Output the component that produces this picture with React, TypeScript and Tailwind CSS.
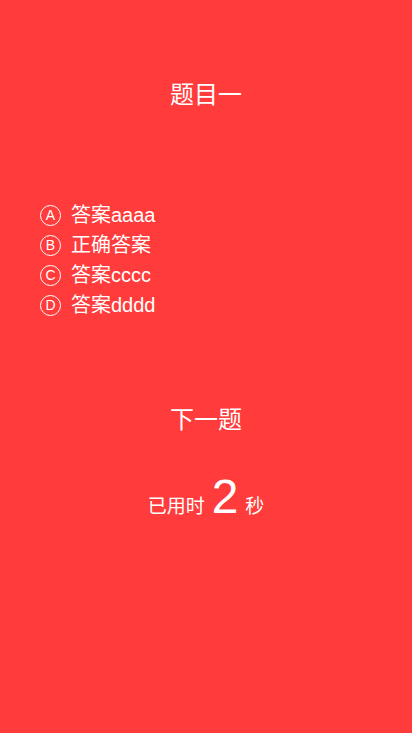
const options = [
  { mark: "A", text: "答案aaaa" },
  { mark: "B", text: "正确答案" },
  { mark: "C", text: "答案cccc" },
  { mark: "D", text: "答案dddd" },
];

export default function App() {
  return (
    <div
      className="w-[412px] h-[733px] bg-[#ff3b3b] text-white flex flex-col"
      style={{ fontFamily: '"Liberation Sans", "Noto Sans CJK SC", sans-serif' }}
    >
      <h1 className="mt-[79px] text-center text-[24px] leading-[32px]">题目一</h1>

      <ul className="mt-[89px] pl-[40px] flex flex-col">
        {options.map((o) => (
          <li key={o.mark} className="flex items-center h-[30px] text-[20px]">
            <span className="w-[21px] h-[21px] rounded-full border border-white flex items-center justify-center text-[14px] leading-none">
              {o.mark}
            </span>
            <span className="ml-[10px]">{o.text}</span>
          </li>
        ))}
      </ul>

      <div className="mt-[84px] text-center text-[24px] leading-[32px]">下一题</div>

      <div className="mt-[37px] flex items-baseline justify-center gap-[7px]">
        <span className="text-[19px]">已用时</span>
        <span className="text-[48px] leading-none">2</span>
        <span className="text-[19px]">秒</span>
      </div>
    </div>
  );
}
